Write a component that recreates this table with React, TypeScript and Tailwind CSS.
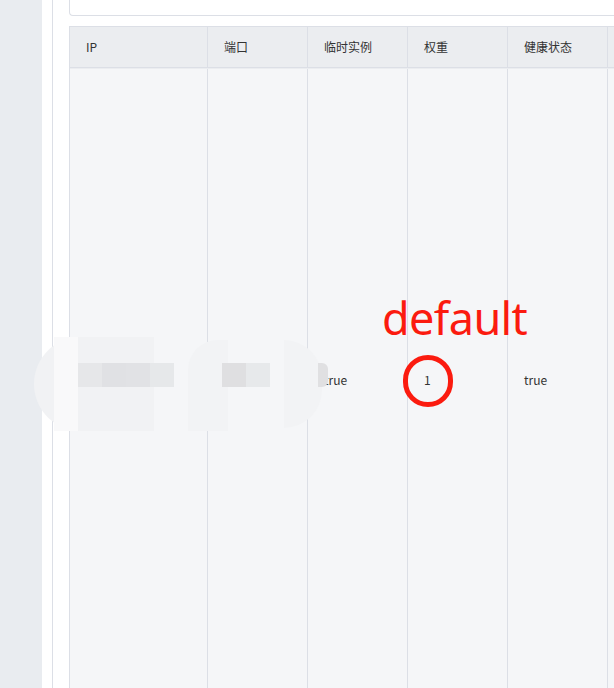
import React from "react";

const columns = [
  {key: "ip", title: "IP", width: "w-[138px]"},
  {key: "port", title: "端口", width: "w-[100px]"},
  {key: "ephemeral", title: "临时实例", width: "w-[100px]"},
  {key: "weight", title: "权重", width: "w-[100px]"},
  {key: "healthy", title: "健康状态", width: "w-[100px]"},
  {key: "more", title: "", width: "w-[100px]"},
];

const row: Record<string, string> = {
  ip: "",
  port: "",
  ephemeral: "true",
  weight: "1",
  healthy: "true",
  more: "",
};

function Mosaic() {
  // the blurred / pixelated part that hides the address
  return (
    <div className="pointer-events-none absolute left-[34px] top-[337px] h-[94px] w-[288px]">
      <div className="absolute left-0 top-0 h-[94px] w-[120px] rounded-l-full bg-[#f1f2f4]" />
      <div className="absolute left-[20px] top-0 h-[94px] w-[24px] bg-[#f9f9fa]" />
      <div className="absolute left-[154px] top-[3px] h-[91px] w-[40px] rounded-tl-[30px] bg-[#f2f3f5]" />
      <div className="absolute left-[250px] top-[3px] h-[88px] w-[38px] rounded-r-full bg-[#f2f3f5]" />
      <div className="absolute left-[44px] top-[26px] flex h-[24px]">
        <div className="w-[24px] bg-[#e6e7e9]" />
        <div className="w-[24px] bg-[#e0e1e4]" />
        <div className="w-[24px] bg-[#e1e2e5]" />
        <div className="w-[24px] bg-[#e6e8ea]" />
      </div>
      <div className="absolute left-[188px] top-[26px] flex h-[24px]">
        <div className="w-[24px] bg-[#dfdfe1]" />
        <div className="w-[24px] bg-[#e7e9eb]" />
      </div>
      <div className="absolute left-[284px] top-[26px] h-[24px] w-[10px] rounded-r-md bg-[#e0e0e2]" />
    </div>
  );
}

export default function App() {
  return (
    <div className="relative flex h-[688px] w-[614px] overflow-hidden bg-white font-['Noto_Sans_CJK_SC',sans-serif] text-[12px] text-[#333]">
      <div className="w-[42px] shrink-0 bg-[#e9ecf0]" />
      <div className="ml-[10px] flex-1 border-l border-[#dcdfe6] pl-[16px]">
        <div className="h-[16px] w-[600px] rounded-bl-[4px] border-b border-l border-[#dcdfe6]" />
        <div className="mt-[10px] w-[700px] border-l border-t border-[#dcdfe6]">
          <div className="flex h-[42px] bg-[#ebedf0] pb-[1px]">
            {columns.map((col) => (
              <div key={col.key} className={`${col.width} flex items-center border-b border-r border-[#dcdfe6] pl-[16px]`}>
                {col.title}
              </div>
            ))}
          </div>
          <div className="flex h-[622px] bg-[#f5f6f8]">
            {columns.map((col) => (
              <div key={col.key} className={`${col.width} flex items-center border-r border-[#dcdfe6] pl-[16px]`}>
                {row[col.key]}
              </div>
            ))}
          </div>
        </div>
      </div>

      <Mosaic />

      <div className="pointer-events-none absolute left-[382px] top-[295px] font-['Noto_Sans',sans-serif] text-[45px] leading-none tracking-[-0.6px] text-[#fb1b0f]">
        default
      </div>
      <div className="pointer-events-none absolute left-[403px] top-[355px] h-[52px] w-[50px] rounded-full border-[5px] border-[#fb1b0f]" />
    </div>
  );
}
